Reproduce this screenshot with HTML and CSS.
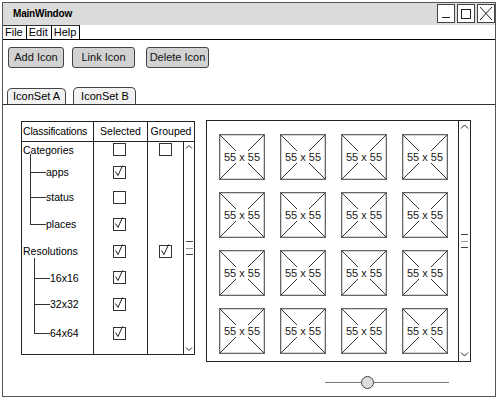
FILE: index.html
```html
<!DOCTYPE html>
<html>
<head>
<meta charset="utf-8">
<title>MainWindow</title>
<link rel="stylesheet" href="styles.css">
</head>
<body>
<div class="window">
  <div class="titlebar">
    <span class="title">MainWindow</span>
    <div class="winbtns">
      <span class="wbtn"><svg width="18" height="19" viewBox="0 0 18 19"><line x1="5" y1="13.5" x2="13" y2="13.5" stroke="#222" stroke-width="1"/></svg></span>
      <span class="wbtn"><svg width="18" height="19" viewBox="0 0 18 19"><rect x="4.5" y="5.5" width="9" height="9" fill="none" stroke="#222" stroke-width="1"/></svg></span>
      <span class="wbtn"><svg width="18" height="19" viewBox="0 0 18 19"><path d="M3 3 L15 16 M15 3 L3 16" stroke="#222" stroke-width="1" fill="none"/></svg></span>
    </div>
  </div>
  <div class="menubar">
    <span class="menu">File</span><span class="menu">Edit</span><span class="menu">Help</span>
  </div>
  <div class="toolbar">
    <button class="btn btn-add">Add Icon</button>
    <button class="btn btn-link">Link Icon</button>
    <button class="btn btn-del">Delete Icon</button>
  </div>
  <div class="tabs">
    <span class="tab">IconSet A</span>
    <span class="tab tab-active">IconSet B</span>
  </div>
  <div class="content">
    <div class="main">
      <div class="tree">
        <div class="thead">
          <span class="th th-label">Classifications</span>
          <span class="th th-sel">Selected</span>
          <span class="th th-grp">Grouped</span>
        </div>
        <div class="tbody">
          <div class="col col-label">
            <div class="cell r1">Categories</div>
            <div class="cell r2 child first">apps</div>
            <div class="cell r3 child">status</div>
            <div class="cell r4 child last">places</div>
            <div class="cell r5">Resolutions</div>
            <div class="cell r6 child res first">16x16</div>
            <div class="cell r7 child res">32x32</div>
            <div class="cell r8 child res last">64x64</div>
          </div>
          <div class="col col-sel">
            <div class="cell r1"><span class="cb"></span></div>
            <div class="cell r2"><span class="cb checked"><svg width="14" height="14" viewBox="0 0 14 14"><path d="M2.5 6.5 L5 10.5 L9.5 0.5" fill="none" stroke="#222" stroke-width="1"/></svg></span></div>
            <div class="cell r3"><span class="cb"></span></div>
            <div class="cell r4"><span class="cb checked"><svg width="14" height="14" viewBox="0 0 14 14"><path d="M2.5 6.5 L5 10.5 L9.5 0.5" fill="none" stroke="#222" stroke-width="1"/></svg></span></div>
            <div class="cell r5"><span class="cb checked"><svg width="14" height="14" viewBox="0 0 14 14"><path d="M2.5 6.5 L5 10.5 L9.5 0.5" fill="none" stroke="#222" stroke-width="1"/></svg></span></div>
            <div class="cell r6"><span class="cb checked"><svg width="14" height="14" viewBox="0 0 14 14"><path d="M2.5 6.5 L5 10.5 L9.5 0.5" fill="none" stroke="#222" stroke-width="1"/></svg></span></div>
            <div class="cell r7"><span class="cb checked"><svg width="14" height="14" viewBox="0 0 14 14"><path d="M2.5 6.5 L5 10.5 L9.5 0.5" fill="none" stroke="#222" stroke-width="1"/></svg></span></div>
            <div class="cell r8"><span class="cb checked"><svg width="14" height="14" viewBox="0 0 14 14"><path d="M2.5 6.5 L5 10.5 L9.5 0.5" fill="none" stroke="#222" stroke-width="1"/></svg></span></div>
          </div>
          <div class="col col-grp">
            <div class="cell r1"><span class="cb"></span></div>
            <div class="cell r2"></div>
            <div class="cell r3"></div>
            <div class="cell r4"></div>
            <div class="cell r5"><span class="cb checked"><svg width="14" height="14" viewBox="0 0 14 14"><path d="M2.5 6.5 L5 10.5 L9.5 0.5" fill="none" stroke="#222" stroke-width="1"/></svg></span></div>
          </div>
          <div class="vscroll">
            <svg class="arrow" width="10" height="8" viewBox="0 0 10 8"><path d="M2 5.5 L5 2.5 L8 5.5" fill="none" stroke="#222" stroke-width="1"/></svg>
            <span class="thumb"></span>
            <svg class="arrow" width="10" height="8" viewBox="0 0 10 8"><path d="M2 2.5 L5 5.5 L8 2.5" fill="none" stroke="#222" stroke-width="1"/></svg>
          </div>
        </div>
      </div>
      <div class="panel">
        <div class="grid">
          <div class="ph"><svg viewBox="0 0 44 44" preserveAspectRatio="none"><path d="M0 0 L44 44 M44 0 L0 44" stroke="#333" stroke-width="1" fill="none"/></svg><span>55 x 55</span></div>
          <div class="ph"><svg viewBox="0 0 44 44" preserveAspectRatio="none"><path d="M0 0 L44 44 M44 0 L0 44" stroke="#333" stroke-width="1" fill="none"/></svg><span>55 x 55</span></div>
          <div class="ph"><svg viewBox="0 0 44 44" preserveAspectRatio="none"><path d="M0 0 L44 44 M44 0 L0 44" stroke="#333" stroke-width="1" fill="none"/></svg><span>55 x 55</span></div>
          <div class="ph"><svg viewBox="0 0 44 44" preserveAspectRatio="none"><path d="M0 0 L44 44 M44 0 L0 44" stroke="#333" stroke-width="1" fill="none"/></svg><span>55 x 55</span></div>
          <div class="ph"><svg viewBox="0 0 44 44" preserveAspectRatio="none"><path d="M0 0 L44 44 M44 0 L0 44" stroke="#333" stroke-width="1" fill="none"/></svg><span>55 x 55</span></div>
          <div class="ph"><svg viewBox="0 0 44 44" preserveAspectRatio="none"><path d="M0 0 L44 44 M44 0 L0 44" stroke="#333" stroke-width="1" fill="none"/></svg><span>55 x 55</span></div>
          <div class="ph"><svg viewBox="0 0 44 44" preserveAspectRatio="none"><path d="M0 0 L44 44 M44 0 L0 44" stroke="#333" stroke-width="1" fill="none"/></svg><span>55 x 55</span></div>
          <div class="ph"><svg viewBox="0 0 44 44" preserveAspectRatio="none"><path d="M0 0 L44 44 M44 0 L0 44" stroke="#333" stroke-width="1" fill="none"/></svg><span>55 x 55</span></div>
          <div class="ph"><svg viewBox="0 0 44 44" preserveAspectRatio="none"><path d="M0 0 L44 44 M44 0 L0 44" stroke="#333" stroke-width="1" fill="none"/></svg><span>55 x 55</span></div>
          <div class="ph"><svg viewBox="0 0 44 44" preserveAspectRatio="none"><path d="M0 0 L44 44 M44 0 L0 44" stroke="#333" stroke-width="1" fill="none"/></svg><span>55 x 55</span></div>
          <div class="ph"><svg viewBox="0 0 44 44" preserveAspectRatio="none"><path d="M0 0 L44 44 M44 0 L0 44" stroke="#333" stroke-width="1" fill="none"/></svg><span>55 x 55</span></div>
          <div class="ph"><svg viewBox="0 0 44 44" preserveAspectRatio="none"><path d="M0 0 L44 44 M44 0 L0 44" stroke="#333" stroke-width="1" fill="none"/></svg><span>55 x 55</span></div>
          <div class="ph"><svg viewBox="0 0 44 44" preserveAspectRatio="none"><path d="M0 0 L44 44 M44 0 L0 44" stroke="#333" stroke-width="1" fill="none"/></svg><span>55 x 55</span></div>
          <div class="ph"><svg viewBox="0 0 44 44" preserveAspectRatio="none"><path d="M0 0 L44 44 M44 0 L0 44" stroke="#333" stroke-width="1" fill="none"/></svg><span>55 x 55</span></div>
          <div class="ph"><svg viewBox="0 0 44 44" preserveAspectRatio="none"><path d="M0 0 L44 44 M44 0 L0 44" stroke="#333" stroke-width="1" fill="none"/></svg><span>55 x 55</span></div>
          <div class="ph"><svg viewBox="0 0 44 44" preserveAspectRatio="none"><path d="M0 0 L44 44 M44 0 L0 44" stroke="#333" stroke-width="1" fill="none"/></svg><span>55 x 55</span></div>
        </div>
        <div class="vscroll vscroll-panel">
          <svg class="arrow" width="11" height="10" viewBox="0 0 11 10"><path d="M2 6.5 L5.5 3 L9 6.5" fill="none" stroke="#222" stroke-width="1"/></svg>
          <span class="thumb"></span>
          <svg class="arrow" width="11" height="10" viewBox="0 0 11 10"><path d="M2 3.5 L5.5 7 L9 3.5" fill="none" stroke="#222" stroke-width="1"/></svg>
        </div>
      </div>
    </div>
    <div class="slider">
      <span class="knob"></span>
    </div>
  </div>
</div>
</body>
</html>
```

FILE: styles.css
```css
* { box-sizing: border-box; }

html, body {
  margin: 0;
  padding: 0;
  background: #fff;
}

body {
  width: 500px;
  height: 400px;
  overflow: hidden;
  font-family: "Liberation Sans", Arial, sans-serif;
  font-size: 11px;
  color: #000;
}

.window {
  margin: 2px 0 0 2px;
  width: 494px;
  height: 395px;
  border: 1px solid #555;
  display: flex;
  flex-direction: column;
}

/* title bar */
.titlebar {
  height: 22px;
  background: #dcdcdc;
  display: flex;
  justify-content: space-between;
  align-items: flex-start;
  padding-left: 10px;
}

.title {
  font-weight: bold;
  font-size: 10px;
  line-height: 22px;
  letter-spacing: -0.2px;
}

.winbtns {
  display: flex;
  gap: 2px;
  padding-top: 1px;
}

.wbtn {
  width: 18px;
  height: 19px;
  background: #fff;
  border: 1px solid #444;
  display: block;
  position: relative;
}

.wbtn svg {
  display: block;
  margin: -1px 0 0 -1px;
}

/* menu bar */
.menubar {
  height: 15px;
  display: flex;
  border-bottom: 1px solid #000;
}

.menu {
  height: 14px;
  line-height: 13px;
  padding: 0 3px 0 2px;
  border-top: 1px solid #333;
  border-right: 1px solid #000;
}

/* toolbar */
.toolbar {
  display: flex;
  padding: 7px 0 0 5px;
  height: 29px;
}

.btn {
  font-family: inherit;
  font-size: 11px;
  color: #111;
  height: 21px;
  padding: 0;
  background: #d2d2d2;
  border: 1px solid #444;
  border-radius: 3px;
  text-align: center;
  line-height: 19px;
}

.btn-add { width: 56px; }
.btn-link { width: 63px; margin-left: 8px; }
.btn-del { width: 63px; margin-left: 11px; }

/* tabs */
.tabs {
  margin-top: 19px;
  height: 17px;
  display: flex;
  align-items: flex-end;
  gap: 7px;
  padding-left: 4px;
  border-bottom: 1px solid #333;
}

.tab {
  height: 16px;
  line-height: 15px;
  padding: 0 5px;
  border: 1px solid #444;
  border-bottom: none;
  border-radius: 5px 5px 0 0;
  background: #f1f1f1;
  font-size: 11px;
}

.tab-active {
  height: 17px;
  line-height: 16px;
  padding: 0 6px 0 7px;
}

/* content */
.content {
  flex: 1;
  padding: 15px 0 0 18px;
  display: flex;
  flex-direction: column;
}

.main {
  display: flex;
  align-items: flex-start;
  gap: 11px;
}

/* tree table */
.tree {
  margin-top: 1px;
  width: 174px;
  height: 234px;
  border: 1px solid #222;
  display: flex;
  flex-direction: column;
}

.thead {
  height: 20px;
  display: flex;
  border-bottom: 1px solid #222;
}

.th {
  line-height: 19px;
  font-size: 10.5px;
}

.th-label {
  width: 72px;
  padding-left: 1px;
  border-right: 1px solid #222;
  white-space: nowrap;
  overflow: hidden;
  letter-spacing: -0.2px;
}

.th-sel {
  width: 54px;
  border-right: 1px solid #222;
  text-align: center;
}

.th-grp {
  flex: 1;
  text-align: center;
}

.tbody {
  flex: 1;
  display: flex;
}

.col {
  display: flex;
  flex-direction: column;
  border-right: 1px solid #222;
}

.col-label { width: 72px; }
.col-sel { width: 54px; }
.col-grp { width: 36px; }

.cell {
  display: flex;
  align-items: center;
  font-size: 10.5px;
}

.col-label .cell { padding-left: 1px; }
.col-sel .cell,
.col-grp .cell { justify-content: center; }
.col-sel .cell { padding-right: 3px; }

.r1 { height: 18px; padding-bottom: 3px; }
.r2 { height: 24px; }
.r3 { height: 26px; }
.r4 { height: 28px; }
.r5 { height: 27px; padding-bottom: 1px; }
.r6 { height: 25px; }
.r7 { height: 28px; }
.r8 { height: 30px; }

.child {
  position: relative;
  padding-left: 24px !important;
}

.child::before {
  content: "";
  position: absolute;
  left: 8px;
  top: 0;
  height: 50%;
  width: 15px;
  border-left: 1px solid #333;
  border-bottom: 1px solid #333;
}

.child::after {
  content: "";
  position: absolute;
  left: 8px;
  top: 50%;
  bottom: 0;
  border-left: 1px solid #333;
}

.child.first::before { top: -6px; height: calc(50% + 6px); }
.child.last::after { display: none; }

.child.res { padding-left: 28px !important; }
.child.res::before { left: 12px; width: 15px; }
.child.res::after { left: 12px; }
.child.res.first::before { top: -7px; height: calc(50% + 7px); }

.cb {
  width: 13px;
  height: 13px;
  border: 1px solid #333;
  background: #fff;
  display: block;
  position: relative;
}

.cb svg {
  display: block;
  margin: -2px 0 0 -1px;
}

/* scrollbars */
.vscroll {
  flex: 1;
  display: flex;
  flex-direction: column;
  align-items: center;
  justify-content: space-between;
  padding: 1px 0;
}

.arrow { display: block; }

.thumb {
  display: block;
  width: 7px;
  height: 14px;
  border-top: 1px solid #444;
  border-bottom: 1px solid #444;
  position: relative;
}

.thumb::after {
  content: "";
  position: absolute;
  left: 0;
  right: 0;
  top: 6px;
  border-top: 1px solid #999;
}

/* icon panel */
.panel {
  width: 265px;
  height: 242px;
  border: 1px solid #222;
  display: flex;
}

.grid {
  flex: 1;
  display: grid;
  grid-template-columns: repeat(4, 46px);
  grid-auto-rows: 46px;
  column-gap: 15px;
  row-gap: 12px;
  padding: 13px 0 0 12px;
  overflow: hidden;
}

.ph {
  position: relative;
  border: 1px solid #666;
  box-shadow: inset 0 0 0 1px #d4d4d4;
  display: flex;
  align-items: center;
  justify-content: center;
  background: #fff;
}

.ph svg {
  position: absolute;
  left: 0;
  top: 0;
  width: 100%;
  height: 100%;
}

.ph span {
  position: relative;
  background: #fff;
  font-size: 11px;
  line-height: 12px;
  color: #1a1a1a;
  white-space: nowrap;
}

.vscroll-panel {
  flex: 0 0 12px;
  border-left: 1px solid #222;
  padding: 1px 0 2px;
}

/* slider */
.slider {
  margin: 14px 0 0 304px;
  width: 124px;
  height: 13px;
  position: relative;
  display: flex;
  align-items: center;
}

.slider::before {
  content: "";
  position: absolute;
  left: 0;
  right: 0;
  top: 6px;
  border-top: 1px solid #777;
}

.knob {
  position: relative;
  margin-left: 36px;
  width: 13px;
  height: 13px;
  border-radius: 50%;
  border: 1px solid #444;
  background: #ddd;
}
```
